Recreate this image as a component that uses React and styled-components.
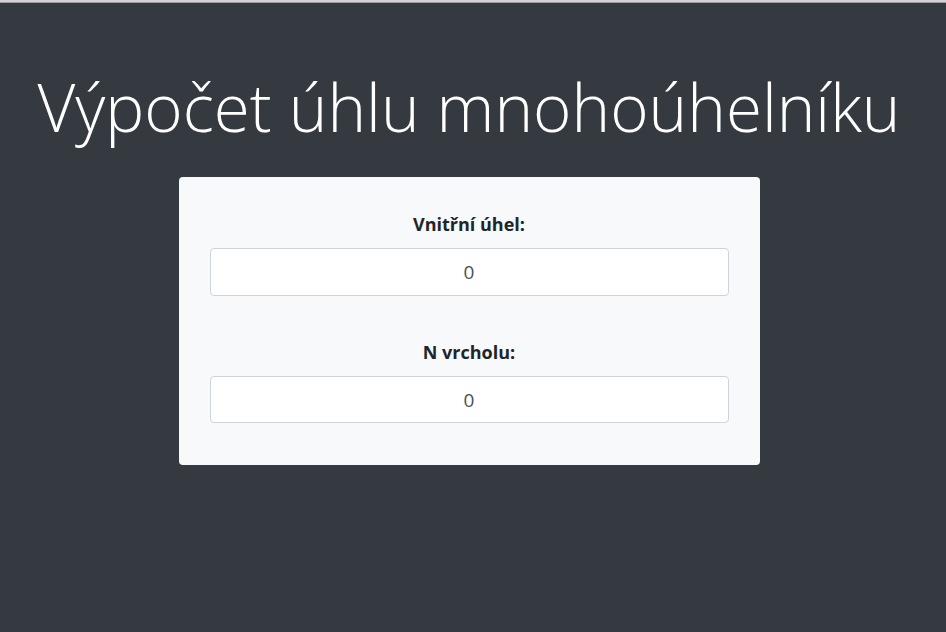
import styled, { createGlobalStyle } from "styled-components";

const GlobalStyle = createGlobalStyle`
  html, body {
    margin: 0;
    padding: 0;
    background: #343a40;
  }
  body {
    font-family: "Open Sans", "Liberation Sans", sans-serif;
    color: #212529;
  }
`;

const Page = styled.div`
  min-height: 632px;
  background: #343a40;
  display: flex;
  flex-direction: column;
  align-items: center;
  padding-right: 8px;
`;

const TopEdge = styled.div`
  align-self: stretch;
  margin-right: -8px;
  height: 2px;
  background: #d4d4d4;
  border-bottom: 1px solid #9c9c9c;
`;

const Title = styled.h1`
  margin: 71px 0 0;
  font-family: "Open Sans", "Liberation Sans", sans-serif;
  font-weight: 300;
  font-size: 65.5px;
  line-height: 1;
  color: #ffffff;
  text-align: center;
  height: 103px;
  white-space: nowrap;
`;

const Card = styled.form`
  width: 581px;
  box-sizing: border-box;
  background: #f8f9fa;
  border-radius: 4px;
  padding: 35px 31px 42px;
  display: flex;
  flex-direction: column;
  gap: 44px;
`;

const Group = styled.div`
  display: flex;
  flex-direction: column;
  align-items: stretch;
`;

const Label = styled.label`
  display: block;
  text-align: center;
  font-weight: 700;
  font-size: 18px;
  line-height: 24px;
  margin-bottom: 12px;
  color: #212529;
`;

const Field = styled.input`
  box-sizing: border-box;
  height: ${(p) => p.$h}px;
  width: 100%;
  border: 1px solid #ced4da;
  border-radius: 4px;
  background: #fff;
  text-align: center;
  font-family: "Open Sans", "Liberation Sans", sans-serif;
  font-size: 19px;
  color: #495057;
  outline: none;
  padding: 0 16px;
`;

export default function App() {
  return (
    <>
      <GlobalStyle />
      <Page>
        <TopEdge />
        <Title>Výpočet úhlu mnohoúhelníku</Title>
        <Card onSubmit={(e) => e.preventDefault()}>
          <Group>
            <Label htmlFor="uhel">Vnitřní úhel:</Label>
            <Field id="uhel" type="text" defaultValue="0" $h={48} />
          </Group>
          <Group>
            <Label htmlFor="vrcholy">N vrcholu:</Label>
            <Field id="vrcholy" type="text" defaultValue="0" $h={47} />
          </Group>
        </Card>
      </Page>
    </>
  );
}
